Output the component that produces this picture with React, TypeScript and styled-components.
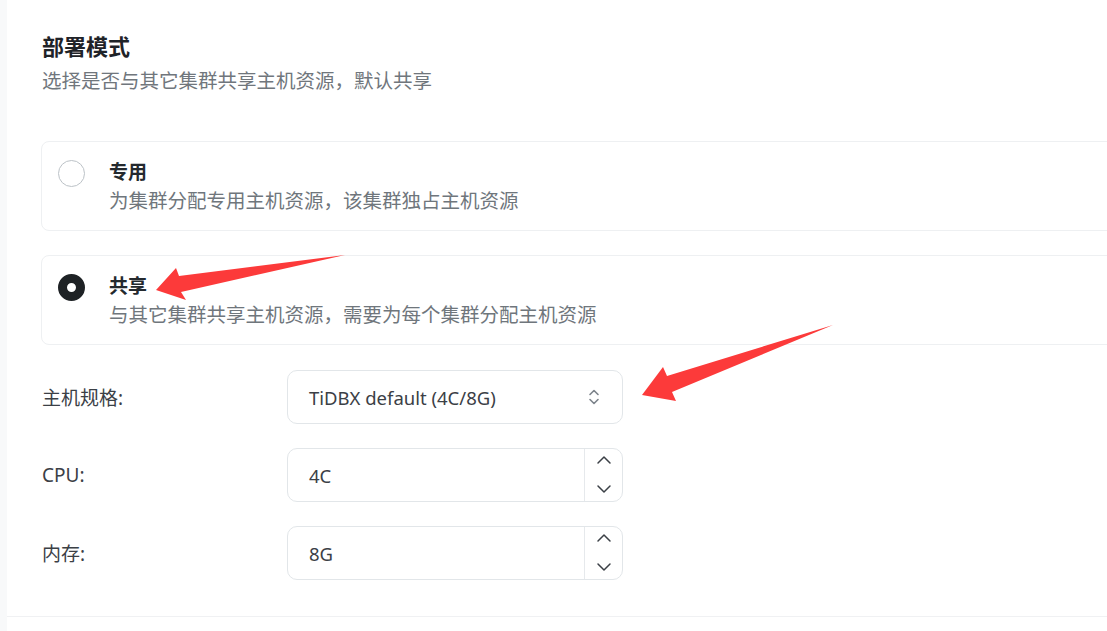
import React, {FC} from "react";
import styled, {createGlobalStyle} from "styled-components";

const GlobalStyle = createGlobalStyle`
  html, body {
    margin: 0;
    padding: 0;
    background: #ffffff;
    overflow: hidden;
  }
  * { box-sizing: border-box; }
`

const Page = styled.div`
  position: relative;
  width: 1107px;
  height: 631px;
  display: flex;
  overflow: hidden;
  font-family: "Noto Sans", "Noto Sans CJK SC", sans-serif;
`

const SideStrip = styled.div`
  width: 7px;
  flex-shrink: 0;
  background: #f8f9fa;
`

const Main = styled.div`
  flex: 1;
  display: flex;
  flex-direction: column;
`

const Content = styled.div`
  padding: 32px 0 0 34px;
  margin-right: -30px;
  height: 616px;
`

const Title = styled.div`
  font-size: 22px;
  line-height: 28px;
  font-weight: 700;
  color: #1f2328;
  padding-left: 1px;
`

const Subtitle = styled.div`
  margin-top: 8px;
  font-size: 19.5px;
  line-height: 26px;
  color: #70767c;
  padding-left: 1px;
`

const CardList = styled.div`
  margin-top: 47px;
  display: flex;
  flex-direction: column;
  gap: 24px;
`

const Card = styled.div`
  height: 90px;
  border: 1px solid #eef0f2;
  border-radius: 8px;
  display: flex;
  align-items: flex-start;
  padding: 17px 0 0 16px;
  gap: 24px;
`

const Radio = styled.span<{checked?: boolean}>`
  width: 27px;
  height: 27px;
  margin-top: 1px;
  border-radius: 50%;
  flex-shrink: 0;
  background: #ffffff;
  border: ${p => p.checked ? "9px solid #1e2225" : "1.5px solid #bcc2c7"};
`

const CardText = styled.div`
  display: flex;
  flex-direction: column;
  gap: 3px;
`

const CardTitle = styled.div`
  font-size: 19px;
  line-height: 26px;
  font-weight: 600;
  color: #24292e;
`

const CardDesc = styled.div`
  font-size: 19.5px;
  line-height: 26px;
  color: #6f767c;
`

const Form = styled.div`
  margin-top: 25px;
  display: grid;
  grid-template-columns: 246px 336px;
  row-gap: 24px;
  align-items: center;
`

const Label = styled.div`
  font-size: 19px;
  color: #3b4046;
  padding-left: 1px;
`

const Field = styled.div`
  height: 54px;
  border: 1px solid #e2e6e9;
  border-radius: 10px;
  display: flex;
  align-items: stretch;
  background: #fff;
`

const FieldValue = styled.div`
  flex: 1;
  display: flex;
  align-items: center;
  padding-left: 21px;
  font-size: 18.5px;
  color: #3b4046;
`

const SelectIcon = styled.div`
  width: 56px;
  display: flex;
  align-items: center;
  justify-content: center;
  color: #7c838a;
`

const Stepper = styled.div`
  width: 38px;
  border-left: 1px solid #e6e9ec;
  display: flex;
  flex-direction: column;
  align-items: center;
  justify-content: space-between;
  padding: 6px 0 7px;
  color: #3b4046;
`

const Footer = styled.div`
  border-top: 1px solid #f0f1f3;
  flex: 1;
`

const Annotation = styled.svg`
  position: absolute;
  left: 0;
  top: 0;
  pointer-events: none;
`

const UpDown: FC = () => (
  <svg width="14" height="18" viewBox="0 0 14 18" fill="none" stroke="currentColor" strokeWidth="1.6" strokeLinecap="round" strokeLinejoin="round">
    <path d="M3 6.5 L7 2.5 L11 6.5"/>
    <path d="M3 11.5 L7 15.5 L11 11.5"/>
  </svg>
)

const Chevron: FC<{dir: "up" | "down"}> = ({dir}) => (
  <svg width="16" height="10" viewBox="0 0 16 10" fill="none" stroke="currentColor" strokeWidth="1.5" strokeLinecap="round" strokeLinejoin="round">
    <path d={dir === "up" ? "M2 8 L8 2 L14 8" : "M2 2 L8 8 L14 2"}/>
  </svg>
)

type TOption = {
  title: string
  desc: string
  checked?: boolean
}

const options: TOption[] = [
  {title: "专用", desc: "为集群分配专用主机资源，该集群独占主机资源"},
  {title: "共享", desc: "与其它集群共享主机资源，需要为每个集群分配主机资源", checked: true},
]

const NumberField: FC<{value: string}> = ({value}) => (
  <Field>
    <FieldValue>{value}</FieldValue>
    <Stepper>
      <Chevron dir="up"/>
      <Chevron dir="down"/>
    </Stepper>
  </Field>
)

export default function App() {
  return <>
    <GlobalStyle/>
    <Page>
      <SideStrip/>
      <Main>
        <Content>
          <Title>部署模式</Title>
          <Subtitle>选择是否与其它集群共享主机资源，默认共享</Subtitle>
          <CardList>
            {options.map(o => (
              <Card key={o.title}>
                <Radio checked={o.checked}/>
                <CardText>
                  <CardTitle>{o.title}</CardTitle>
                  <CardDesc>{o.desc}</CardDesc>
                </CardText>
              </Card>
            ))}
          </CardList>
          <Form>
            <Label>主机规格:</Label>
            <Field>
              <FieldValue>TiDBX default (4C/8G)</FieldValue>
              <SelectIcon><UpDown/></SelectIcon>
            </Field>
            <Label>CPU:</Label>
            <NumberField value="4C"/>
            <Label>内存:</Label>
            <NumberField value="8G"/>
          </Form>
        </Content>
        <Footer/>
      </Main>
      <Annotation width="1107" height="631" viewBox="0 0 1107 631">
        <polygon fill="#fc3a3a" points="156,290 176,268 179,276 345,255 181,292 186,300"/>
        <polygon fill="#fc3a3a" points="642,395 663,367 667,376 833,325 672,392 676,401"/>
      </Annotation>
    </Page>
  </>
}
